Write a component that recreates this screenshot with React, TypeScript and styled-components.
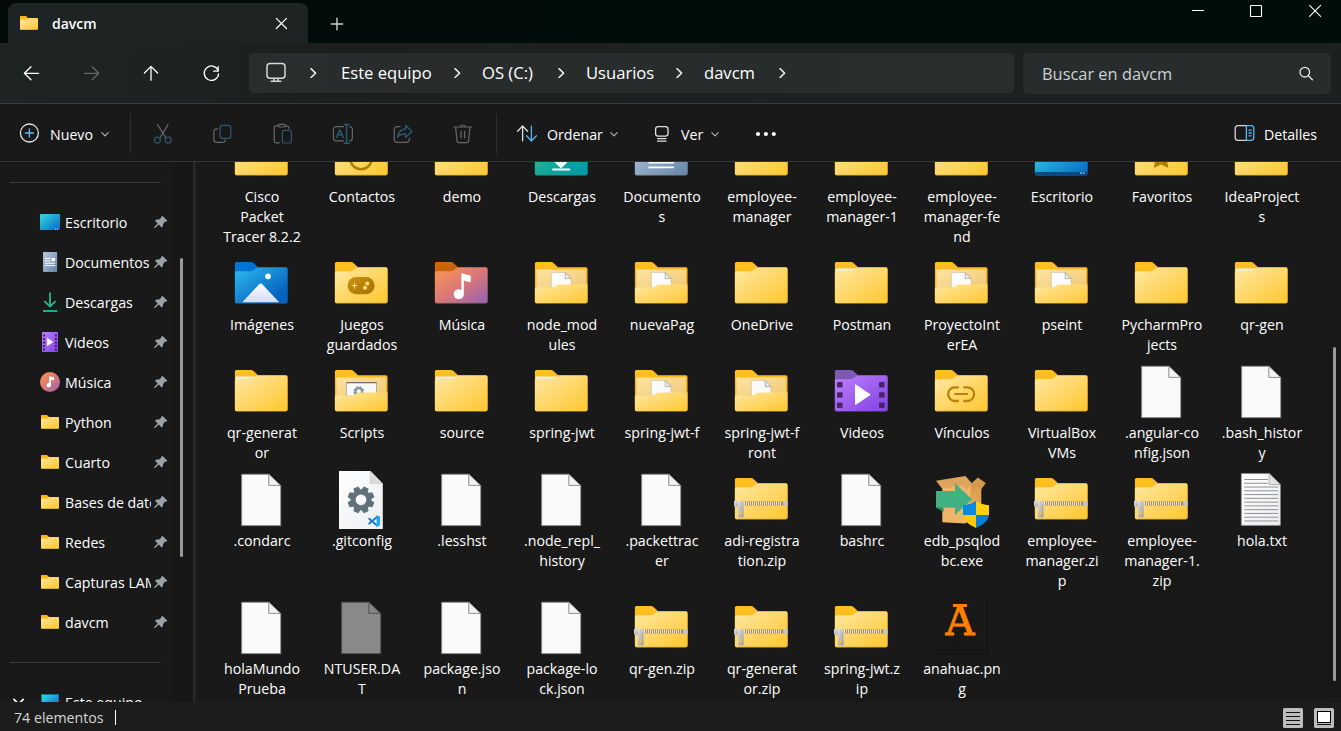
import React from "react";
import styled, { createGlobalStyle } from "styled-components";

const Global = createGlobalStyle`
  * { box-sizing: border-box; }
  html, body { margin: 0; padding: 0; background: #191919; overflow: hidden; }
  body { font-family: "Open Sans", "Noto Sans", sans-serif; color: #fff; }
  svg { display: block; flex: none; }
`;

const Window = styled.div`
  display: flex;
  flex-direction: column;
  width: 1341px;
  height: 731px;
  background: #191919;
  overflow: hidden;
`;

/* ---------- title bar ---------- */

const TitleBar = styled.header`
  display: flex;
  align-items: flex-start;
  height: 43px;
  flex: none;
  padding-left: 8px;
  background: linear-gradient(90deg, #020b09 0%, #000d0b 60%, #000e0b 100%);
`;

const Tab = styled.div`
  display: flex;
  align-items: center;
  width: 300px;
  height: 40px;
  margin-top: 3px;
  padding: 0 20px 0 11px;
  border-radius: 8px 8px 0 0;
  background: #1e2323;
`;

const TabTitle = styled.span`
  flex: 1;
  margin: 1px 0 0 13px;
  font-size: 14px;
  font-weight: 600;
  line-height: 20px;
`;

const NewTab = styled.div`
  margin: 16px 0 0 21px;
`;

const WindowButtons = styled.div`
  display: flex;
  align-items: center;
  gap: 42px;
  margin: 2px 17px 0 auto;
`;

/* ---------- navigation bar ---------- */

const NavBar = styled.nav`
  display: flex;
  align-items: flex-start;
  height: 61px;
  flex: none;
  padding: 10px 10px 0 20px;
  border-bottom: 1px solid #3a3c3a;
  background: linear-gradient(100deg, #1e2323 0%, #1e2222 12%, #1d1f1e 26%, #1c2221 48%, #1b2120 100%);
`;

const NavButtons = styled.div`
  display: flex;
  align-items: center;
  gap: 36px;
  width: 229px;
  height: 40px;
`;

const AddressBar = styled.div`
  display: flex;
  align-items: center;
  width: 765px;
  height: 40px;
  padding-left: 16px;
  border-radius: 5px;
  background: linear-gradient(90deg, #292d2d, #282d2c 30%, #272e2d);
`;

const Trail = styled.div`
  display: flex;
  align-items: center;
  margin-left: 21px;
`;

const Crumb = styled.span<{ $w: number }>`
  width: ${(p) => p.$w}px;
  font-size: 16.6px;
  line-height: 22px;
  white-space: nowrap;
`;

const ChevronSlot = styled.span<{ $w: number }>`
  display: flex;
  width: ${(p) => p.$w}px;
`;

const SearchBox = styled.div`
  display: flex;
  align-items: center;
  justify-content: space-between;
  width: 308px;
  height: 41px;
  margin-left: 9px;
  padding: 0 17px 0 19px;
  border-radius: 5px;
  background: #272d2d;
  color: #cfd1d1;
  font-size: 16.4px;
`;

/* ---------- command bar ---------- */

const CommandBar = styled.div`
  display: flex;
  align-items: center;
  height: 58px;
  flex: none;
  padding: 2px 0 0 19px;
  border-bottom: 1px solid #343434;
  background: #191919;
`;

const Command = styled.div<{ $w?: number; $gap?: number }>`
  display: flex;
  align-items: center;
  gap: ${(p) => p.$gap ?? 10}px;
  ${(p) => (p.$w ? `width: ${p.$w}px;` : "")}
  font-size: 14.2px;
  line-height: 20px;
  white-space: nowrap;
  svg:last-child { margin-left: -3px; }
`;

const CommandText = styled.span`
  padding-top: 2px;
`;

const DetailsCommand = styled(Command)`
  margin: 0 24px 0 auto;
`;

const Divider = styled.div`
  width: 1px;
  height: 40px;
  background: #2e2e2e;
`;

const DisabledTools = styled.div`
  display: flex;
  gap: 36px;
  width: 365px;
  padding-left: 20px;
`;

const SortArea = styled.div`
  display: flex;
  align-items: center;
  padding-left: 19px;
`;

/* ---------- body ---------- */

const Body = styled.main`
  display: flex;
  height: 540px;
  flex: none;
  overflow: hidden;
`;

const Sidebar = styled.aside`
  width: 171px;
  height: 540px;
  overflow: hidden;
`;

const SideSeparator = styled.div`
  display: flex;
  align-items: center;
  height: 40px;
  padding: 0 10px;
  &::before {
    content: "";
    height: 1px;
    width: 151px;
    background: #3a3a3a;
  }
`;

const SideRow = styled.div`
  display: flex;
  align-items: center;
  height: 40px;
`;

const Expander = styled.span`
  display: flex;
  width: 40px;
  padding-left: 13px;
`;

const SideLabel = styled.span`
  width: 86px;
  margin: 1px 3px 0 5px;
  overflow: hidden;
  font-size: 14.2px;
  line-height: 20px;
  white-space: nowrap;
`;

const SideTrack = styled.div`
  width: 22px;
  height: 540px;
  padding: 96px 0 0 9px;
  background: #171717;
`;

const Splitter = styled.div`
  width: 4px;
  background: #1f1f1f;
  border-left: 2px solid #2a2a2a;
`;

const Thumb = styled.div<{ $h: number }>`
  width: 3px;
  height: ${(p) => p.$h}px;
  border-radius: 2px;
  background: #9a9a9a;
`;

const Content = styled.section`
  flex: 1;
  height: 540px;
  padding-left: 14px;
  overflow: hidden;
`;

const IconGrid = styled.div`
  display: grid;
  grid-template-columns: repeat(11, 100px);
  margin-top: -38px;
`;

const Item = styled.figure`
  display: flex;
  flex-direction: column;
  align-items: center;
  margin: 0;
  padding-bottom: 5px;
`;

const ItemLabel = styled.figcaption`
  margin: 1px 0 0 2px;
  min-height: 40px;
  font-size: 14.2px;
  line-height: 20px;
  text-align: center;
  white-space: pre;
`;

const ContentTrack = styled.div`
  width: 17px;
  padding: 185px 0 0 9px;
  background: #181818;
`;

/* ---------- status bar ---------- */

const StatusBar = styled.footer`
  display: flex;
  align-items: center;
  height: 29px;
  flex: none;
  padding: 2px 7px 0 14px;
  background: #1c1c1c;
`;

const StatusText = styled.span`
  width: 101px;
  font-size: 14.2px;
  color: #d6d6d6;
`;

const Caret = styled.span`
  width: 1px;
  height: 15px;
  background: #fff;
`;

const ViewButtons = styled.div`
  display: flex;
  gap: 11px;
  margin-left: auto;
`;

/* ---------- shared gradients ---------- */

const DefsHost = styled.svg`
  position: absolute;
  width: 0;
  height: 0;
`;

type Stops = [string, string][];

const Grad = ({ id, stops, v }: { id: string; stops: Stops; v?: boolean }) => (
  <linearGradient id={id} x1="0" y1="0" x2={v ? "0" : "1"} y2="1">
    {stops.map(([o, c]) => (
      <stop key={o} offset={o} stopColor={c} />
    ))}
  </linearGradient>
);

const Gradients = () => (
  <DefsHost aria-hidden="true">
    <defs>
      <Grad id="yellow" stops={[["0", "#ffe8a3"], ["1", "#ffc62e"]]} />
      <Grad id="yellowTab" v stops={[["0", "#ffc021"], ["1", "#f5b015"]]} />
      <Grad id="inner" stops={[["0", "#ffe4a0"], ["1", "#efc978"]]} />
      <Grad id="blue" stops={[["0.1", "#28b0ec"], ["0.8", "#0563bd"]]} />
      <Grad id="blueTab" stops={[["0", "#0078d8"], ["1", "#0062ba"]]} />
      <Grad id="peak" v stops={[["0", "#ffffff"], ["1", "#d2dcfa"]]} />
      <Grad id="music" stops={[["0", "#ff9750"], ["0.5", "#d97878"], ["1", "#9660b8"]]} />
      <Grad id="musicTab" stops={[["0", "#d36606"], ["1", "#a05a30"]]} />
      <Grad id="violet" stops={[["0", "#bd80fb"], ["1", "#8241e4"]]} />
      <Grad id="teal" stops={[["0", "#3bc686"], ["0.6", "#0ea3a0"], ["1", "#0098a8"]]} />
      <Grad id="slate" stops={[["0", "#b8c9de"], ["1", "#6484a8"]]} />
      <Grad id="desk" stops={[["0", "#35dbe6"], ["1", "#0b66c0"]]} />
      <Grad id="brown" stops={[["0", "#c99410"], ["1", "#a87200"]]} />
      <Grad id="paper" stops={[["0", "#ffffff"], ["1", "#eceef2"]]} />
      <Grad id="metal" stops={[["0", "#e2e2e2"], ["1", "#999999"]]} />
    </defs>
  </DefsHost>
);

/* ---------- large icons ---------- */

const Large = ({ children }: { children: React.ReactNode }) => (
  <svg width="60" height="62" viewBox="0 0 60 62">
    {children}
  </svg>
);

const BACK = "M5 10H19.5Q21.5 10 23 11.4L27 15.3H55Q56.5 15.3 56.5 17V49.6Q56.5 51.2 55 51.2H5.4Q3.9 51.2 3.9 49.6V11.5Q3.9 10 5.4 10Z";
const FRONT = "M3.9 20.6Q3.9 19.2 5.3 19.2H19Q21.5 19.2 23.4 17.6L25.2 16.3Q26.2 15.6 27.6 15.6H55Q56.5 15.6 56.5 17.2V49.6Q56.5 51.2 55 51.2H5.4Q3.9 51.2 3.9 49.6Z";

const FolderShape = ({ back = "yellowTab", front = "yellow" }: { back?: string; front?: string }) => (
  <>
    <path d={BACK} fill={`url(#${back})`} />
    <path d={FRONT} fill={`url(#${front})`} />
    <path d="M4.6 51H55.8" stroke="#8a6a20" strokeOpacity=".45" strokeWidth=".6" />
  </>
);

const Gear = ({ cx, cy, scale = 1, color = "#5f727b" }: { cx: number; cy: number; scale?: number; color?: string }) => (
  <g transform={`translate(${cx} ${cy}) scale(${scale})`}>
    {[22.5, 67.5, 112.5, 157.5, 202.5, 247.5, 292.5, 337.5].map((a) => (
      <path key={a} d="M-3.6 -9L-2.6 -13.4H2.6L3.6 -9Z" transform={`rotate(${a})`} fill={color} />
    ))}
    <circle r="7.9" fill="none" stroke={color} strokeWidth="5" />
  </g>
);

const OpenFolder = ({ gear }: { gear?: boolean }) => (
  <>
    <path d={BACK} fill="url(#yellowTab)" />
    <path d="M5.4 17.6H54.9V36H5.4Z" fill="url(#inner)" />
    {gear ? (
      <>
        <path d="M15.4 22.7H45.5V36H15.4Z" fill="#f7f8fa" stroke="#777" strokeWidth=".5" />
        <path d="M15.4 22.7H45.5" stroke="#666" strokeWidth="1" />
        <Gear cx={27.8} cy={31.5} scale={0.4} color="#8495a0" />
      </>
    ) : (
      <>
        <path d="M20.4 20.5H34.5L40 26.5V36H20.4Z" fill="#fbfbfb" stroke="#c9bfa5" strokeWidth=".6" />
        <path d="M34.2 20.6V26.6H40Z" fill="#eee" stroke="#9a9890" strokeWidth=".7" />
      </>
    )}
    <path
      d="M3.9 35.6H21Q23 35.6 24.6 34L25.2 33.5Q26.2 32.4 28 32.4H56.5V49.6Q56.5 51.2 55 51.2H5.4Q3.9 51.2 3.9 49.6Z"
      fill="url(#yellow)"
    />
  </>
);

const Page = ({ color = "#fafafa", fold = "#f2f2f2", line = "#8f8f8f" }) => (
  <>
    <path d="M10.7 6.3H37.8L49.7 17.6V57.6H10.7Z" fill={color} stroke={line} strokeWidth=".9" />
    <path d="M37.8 6.3V17.4H49.6Z" fill={fold} stroke={line} strokeWidth="1" />
  </>
);

const teeth = Array.from({ length: 19 }, (_, i) => 13.5 + i * 2);

type Kind =
  | "folder" | "full" | "open" | "scripts" | "contacts" | "downloads" | "documents" | "desktop"
  | "favorites" | "pictures" | "games" | "music" | "videos" | "links" | "file" | "ghost"
  | "text" | "gitconfig" | "zip" | "exe" | "image";

const LargeIcon = ({ kind }: { kind: Kind }) => {
  switch (kind) {
    case "full":
      return (
        <Large>
          <path d={BACK} fill="url(#yellowTab)" />
          <path d="M4.6 20V17.4Q4.6 16.4 5.8 16.4H28V20Z" fill="#eceef4" />
          <path d="M3.9 20.2Q3.9 18.6 5.3 18.6H19Q21.5 18.6 23.4 17.4L25.2 16.3Q26.2 15.4 27.6 15.4H55Q56.5 15.4 56.5 17.2V49.6Q56.5 51.2 55 51.2H5.4Q3.9 51.2 3.9 49.6Z" fill="url(#yellow)" />
        </Large>
      );
    case "open":
      return <Large><OpenFolder /></Large>;
    case "scripts":
      return <Large><OpenFolder gear /></Large>;
    case "contacts":
      return (
        <Large>
          <FolderShape />
          <circle cx="30" cy="34.5" r="10.7" fill="none" stroke="#b07c06" strokeWidth="2.6" />
        </Large>
      );
    case "downloads":
      return (
        <Large>
          <FolderShape back="teal" front="teal" />
          <path d="M30 28V42M24.5 37L30 42.4L35.5 37" fill="none" stroke="#fff" strokeWidth="3" />
          <path d="M22 45.5H38.4" stroke="#fff" strokeWidth="1.8" strokeLinecap="round" />
        </Large>
      );
    case "documents":
      return (
        <Large>
          <FolderShape back="slate" front="slate" />
          <path d="M18 38.6H42.4M18 43.4H42.4" stroke="#fff" strokeWidth="1.6" strokeLinecap="round" />
        </Large>
      );
    case "desktop":
      return (
        <Large>
          <FolderShape back="blueTab" front="desk" />
          <path d="M3.9 48H56.5V49.6Q56.5 51.2 55 51.2H5.4Q3.9 51.2 3.9 49.6Z" fill="#084a86" />
          <path d="M49.3 49.1H50.8M51.8 49.1H53.3" stroke="#d4e8f8" strokeWidth="1.3" />
        </Large>
      );
    case "favorites":
      return (
        <Large>
          <FolderShape />
          <path d="M30 22L33 30H41L35.6 35L37.4 44L30 40.4L22.8 44L24.4 35L19 30H27Z" fill="url(#brown)" />
        </Large>
      );
    case "pictures":
      return (
        <Large>
          <FolderShape back="blueTab" front="blue" />
          <circle cx="37" cy="24.3" r="2.9" fill="#f4fbff" />
          <path d="M11.3 50.2L28.2 32.2Q29.7 30.8 31.2 32.2L48.2 50.2Z" fill="url(#peak)" />
        </Large>
      );
    case "games":
      return (
        <Large>
          <FolderShape />
          <rect x="16.6" y="25" width="27" height="17.2" rx="8.4" fill="url(#brown)" />
          <path d="M23.6 30.8V36.6M20.7 33.7H26.5" stroke="#ffe08a" strokeWidth="1" />
          <circle cx="36.3" cy="31.5" r="2" fill="#ffe08a" />
          <circle cx="34" cy="35.8" r="2" fill="#ffe08a" />
        </Large>
      );
    case "music":
      return (
        <Large>
          <FolderShape back="musicTab" front="music" />
          <path d="M30.4 21Q34.6 22.8 39.7 23.4V30.2Q35.6 30 32.8 28.6V42.4A5.1 5 0 1 1 30.4 37.9Z" fill="#fff" />
        </Large>
      );
    case "videos":
      return (
        <Large>
          <path d={BACK} fill="#7e58b5" />
          <path d={FRONT} fill="url(#violet)" />
          {[22, 32.2, 42.4].map((y) => (
            <g key={y} fill="#48246c">
              <rect x="6" y={y} width="5.6" height="5.6" rx="1" />
              <rect x="48" y={y} width="5.6" height="5.6" rx="1" />
            </g>
          ))}
          <path d="M24 24.8Q24 24 24.8 24.4L39 34Q39.8 34.7 39 35.3L24.8 44.8Q24 45 24 44.4Z" fill="#fff" />
        </Large>
      );
    case "links":
      return (
        <Large>
          <FolderShape />
          <path d="M27.8 27.3H24A6.7 6.7 0 0 0 24 41H27.8M32.3 27.3H36.3A6.7 6.7 0 0 1 36.3 41H32.3" fill="none" stroke="#b98208" strokeWidth="2.3" />
          <path d="M24.2 34.1H36.2" stroke="#b98208" strokeWidth="2" strokeLinecap="round" />
        </Large>
      );
    case "file":
      return <Large><Page /></Large>;
    case "ghost":
      return <Large><Page color="#898989" fold="#858585" line="#555" /></Large>;
    case "text":
      return (
        <Large>
          <path d="M10.3 5.6H38.6L49.4 16.8V57.4H10.3Z" fill="url(#paper)" stroke="#8a8a8a" strokeWidth=".8" />
          {Array.from({ length: 12 }, (_, i) => (
            <path key={i} d={`M13.3 ${11.5 + i * 3.77}H${i < 2 ? 37 : 47.2}`} stroke="#919191" strokeWidth="1" />
          ))}
          <path d="M38.2 5.8V16.6H49.4Z" fill="#e2e2e2" stroke="#999" strokeWidth=".7" />
        </Large>
      );
    case "gitconfig":
      return (
        <Large>
          <path d="M8 3H39.5L51.8 15.8V61H8Z" fill="url(#paper)" />
          <path d="M39.2 3V15.6H51.6Z" fill="#dcdcdc" stroke="#c2c2c2" strokeWidth=".6" />
          <Gear cx={30} cy={31.8} />
          <path d="M46 49L38.2 55.6M38.2 50.8L46 57.6" stroke="#1580d0" strokeWidth="2" strokeLinecap="round" />
          <path d="M45.6 47L49 48.6V57.2L45.6 58.8Z" fill="#24a5f0" />
        </Large>
      );
    case "zip":
      return (
        <Large>
          <FolderShape />
          <path d="M13 35.6H53" stroke="#a8894a" strokeWidth="4" />
          {teeth.map((x) => (
            <path key={x} d={`M${x} 33.6V37.4`} stroke="#efebdf" strokeWidth=".95" />
          ))}
          <path d="M3 33L6.5 32.6L8 34H12V37.6H8L6.5 39L3 38.4Z" fill="url(#metal)" />
          <rect x="52" y="33.2" width="4.6" height="5" rx="1" fill="#c4c4c6" />
          <rect x="6.8" y="33" width="5.8" height="16.4" rx="1" fill="url(#metal)" />
          <rect x="8.7" y="43" width="2" height="4.4" rx=".8" fill="#ecc052" />
        </Large>
      );
    case "exe":
      return (
        <Large>
          <path d="M11.3 16L39.5 15.5L49.7 20V46L34 55.5L11.3 54.2Z" fill="#efb568" />
          <path d="M39.5 15.5L50.3 20V46L39.5 52Z" fill="#dfa152" />
          <path d="M5 12.7L34.5 8L41 15.6L35.5 22L31 17.5L11 20.5Z" fill="#dca55b" />
          <path d="M40.4 15.6L46.8 9.6L54.8 15L50 21.4L47 18.5L41 25Z" fill="#d39a4e" />
          <path d="M5 39.7H12.5V44Z" fill="#2c8c60" />
          <path d="M5 23H24V15.3L41 31.3L24 47V39.7H5Z" fill="#41b183" />
          <path d="M45 33Q39 37 32 37.2V46.9H45Z" fill="#0a8ade" />
          <path d="M45 33Q51 37 58 37.2V46.9H45Z" fill="#ffd00b" />
          <path d="M32 46.9Q33 55 45 60V46.9Z" fill="#ffc70a" />
          <path d="M58 46.9Q57 55 45 60V46.9Z" fill="#0a80d4" />
        </Large>
      );
    case "image":
      return (
        <Large>
          <rect x="5" y="4" width="51.5" height="54" fill="#191919" />
          <path d="M56.3 4V58H5" fill="none" stroke="#111" strokeWidth="1" />
          <rect x="22" y="8" width="14" height="3" fill="#ff8000" />
          <text x="29" y="39" textAnchor="middle" fontFamily="DejaVu Serif" fontSize="41" textLength="29" lengthAdjust="spacingAndGlyphs" fill="#ff8000" stroke="#ff8000" strokeWidth=".9">A</text>
          <text x="29" y="48" textAnchor="middle" fontFamily="DejaVu Serif" fontSize="6.5" fill="#131313">ANÁHUAC</text>
          <text x="29" y="55" textAnchor="middle" fontFamily="DejaVu Serif" fontSize="6" fill="#131313">QUERÉTARO</text>
        </Large>
      );
    default:
      return <Large><FolderShape /></Large>;
  }
};

/* ---------- small icons ---------- */

type IconProps = { size?: number; w?: number; color?: string; children: React.ReactNode };

const Glyph = ({ size = 20, w = 1.2, color = "#fff", children }: IconProps) => (
  <svg width={size} height={size} viewBox={`0 0 ${size} ${size}`} fill="none" stroke={color} strokeWidth={w} strokeLinecap="round" strokeLinejoin="round">
    {children}
  </svg>
);

const SmallFolder = () => (
  <svg width="20" height="20" viewBox="0 0 20 20">
    <path d="M1.5 3H7L9 5H18Q19 5 19 6V16Q19 16.8 18.2 16.8H1.8Q1 16.8 1 16V3.6Q1 3 1.5 3Z" fill="#fdb813" />
    <path d="M1 6.8H7L9 5.3H18Q19 5.3 19 6.2V16Q19 16.4 18.2 16.4H1.8Q1 16.4 1 16Z" fill="url(#yellow)" />
  </svg>
);

const Pin = () => (
  <svg width="14" height="14" viewBox="0 0 14 14">
    <path d="M8.2 .8L13.3 5.5L12.1 6.8L11 6.7L9.2 9L8.9 11.2L7.5 12.4L4.7 9.6L1.2 13H.3V12L3.7 8.6L1.1 6L2.3 4.6L5 4.5L7.2 2.8L7.1 1.9Z" fill="#98a2a8" />
  </svg>
);

type SideKind = "desktop" | "documents" | "downloads" | "videos" | "music" | "folder" | "pc";

const SideIcon = ({ kind }: { kind: SideKind }) => {
  if (kind === "folder") return <SmallFolder />;
  return (
    <svg width="20" height="20" viewBox="0 0 20 20">
      {kind === "desktop" && (
        <>
          <rect x="0" y="2" width="20" height="16" rx=".8" fill="url(#desk)" />
          <path d="M15 17.2H16M17 17.2H18" stroke="#e5f4ff" strokeWidth=".9" />
        </>
      )}
      {kind === "documents" && (
        <>
          <rect x="3" y="0" width="14.2" height="20" rx="1" fill="url(#slate)" />
          <path d="M5 6.5H10.5M5 8.9H10.5M5 11.2H15M5 13.5H15" stroke="#fff" strokeWidth="1" />
          <rect x="11.6" y="6" width="3.4" height="3.2" fill="#fff" />
        </>
      )}
      {kind === "downloads" && (
        <>
          <path d="M10 .5V14M4.4 9.2L10 14.6L15.6 9.2" fill="none" stroke="#22ba90" strokeWidth="1.8" />
          <path d="M3 19H17.2" stroke="#1db79a" strokeWidth="1.9" />
        </>
      )}
      {kind === "videos" && (
        <>
          <rect x="2" y="0" width="16" height="20" rx="1" fill="url(#violet)" />
          <path d="M4.1 2.6V18.8M15.9 2.6V18.8" stroke="#3f2262" strokeWidth="2" strokeDasharray="2 1.5" />
          <path d="M7 5.8L13.4 10L7 14.2Z" fill="#fff" />
        </>
      )}
      {kind === "music" && (
        <>
          <circle cx="10" cy="10" r="10" fill="url(#music)" />
          <path d="M9.2 4L14 5.4V8.2L11 7.5V13A2.2 2.2 0 1 1 9.2 11Z" fill="#fff" />
        </>
      )}
      {kind === "pc" && (
        <>
          <rect x="1" y="2" width="18" height="13" fill="#087a92" />
          <rect x="2" y="3" width="16" height="12" fill="url(#desk)" />
        </>
      )}
    </svg>
  );
};

const CrumbChevron = () => (
  <Glyph size={10} w={1.5} color="#e8e8e8"><path d="M3 .6L7.6 5.1L3 9.6" /></Glyph>
);

const DropChevron = () => (
  <Glyph size={10} w={1.1} color="#b5b5b5"><path d="M1.8 3.6L5 6.8L8.2 3.6" /></Glyph>
);

const GREY = "#666868";
const DIM_BLUE = "#2a5870";

/* ---------- data ---------- */

const crumbs: [string, number][] = [
  ["Este equipo", 111],
  ["OS (C:)", 74],
  ["Usuarios", 88],
  ["davcm", 73],
];

const sideItems: [SideKind, string][] = [
  ["desktop", "Escritorio"],
  ["documents", "Documentos"],
  ["downloads", "Descargas"],
  ["videos", "Videos"],
  ["music", "Música"],
  ["folder", "Python"],
  ["folder", "Cuarto"],
  ["folder", "Bases de datos"],
  ["folder", "Redes"],
  ["folder", "Capturas LAMP"],
  ["folder", "davcm"],
];

const items: [Kind, string][] = [
  ["folder", "Cisco\nPacket\nTracer 8.2.2"],
  ["contacts", "Contactos"],
  ["folder", "demo"],
  ["downloads", "Descargas"],
  ["documents", "Documento\ns"],
  ["folder", "employee-\nmanager"],
  ["folder", "employee-\nmanager-1"],
  ["folder", "employee-\nmanager-fe\nnd"],
  ["desktop", "Escritorio"],
  ["favorites", "Favoritos"],
  ["folder", "IdeaProject\ns"],
  ["pictures", "Imágenes"],
  ["games", "Juegos\nguardados"],
  ["music", "Música"],
  ["open", "node_mod\nules"],
  ["open", "nuevaPag"],
  ["folder", "OneDrive"],
  ["full", "Postman"],
  ["open", "ProyectoInt\nerEA"],
  ["open", "pseint"],
  ["folder", "PycharmPro\njects"],
  ["full", "qr-gen"],
  ["full", "qr-generat\nor"],
  ["scripts", "Scripts"],
  ["full", "source"],
  ["full", "spring-jwt"],
  ["open", "spring-jwt-f"],
  ["open", "spring-jwt-f\nront"],
  ["videos", "Videos"],
  ["links", "Vínculos"],
  ["folder", "VirtualBox\nVMs"],
  ["file", ".angular-co\nnfig.json"],
  ["file", ".bash_histor\ny"],
  ["file", ".condarc"],
  ["gitconfig", ".gitconfig"],
  ["file", ".lesshst"],
  ["file", ".node_repl_\nhistory"],
  ["file", ".packettrac\ner"],
  ["zip", "adi-registra\ntion.zip"],
  ["file", "bashrc"],
  ["exe", "edb_psqlod\nbc.exe"],
  ["zip", "employee-\nmanager.zi\np"],
  ["zip", "employee-\nmanager-1.\nzip"],
  ["text", "hola.txt"],
  ["file", "holaMundo\nPrueba"],
  ["ghost", "NTUSER.DA\nT"],
  ["file", "package.jso\nn"],
  ["file", "package-lo\nck.json"],
  ["zip", "qr-gen.zip"],
  ["zip", "qr-generat\nor.zip"],
  ["zip", "spring-jwt.z\nip"],
  ["image", "anahuac.pn\ng"],
];

/* ---------- app ---------- */

export default function App() {
  return (
    <Window>
      <Global />
      <Gradients />
      <TitleBar>
        <Tab>
          <SmallFolder />
          <TabTitle>davcm</TabTitle>
          <Glyph size={13} w={1.2}><path d="M1.3 1.3L11.5 11.5M11.5 1.3L1.3 11.5" /></Glyph>
        </Tab>
        <NewTab>
          <Glyph size={16} w={1.4} color="#cfd3d2"><path d="M8 2.3V13.7M2.3 8H13.7" /></Glyph>
        </NewTab>
        <WindowButtons>
          <Glyph size={16} w={1}><path d="M2.5 7.5H13.5" /></Glyph>
          <Glyph size={16} w={1.1}><rect x="2.5" y="2.5" width="11" height="11" rx=".6" /></Glyph>
          <Glyph size={18} w={1.1}><path d="M3.6 3.4L14.6 14.4M14.6 3.4L3.6 14.4" /></Glyph>
        </WindowButtons>
      </TitleBar>

      <NavBar>
        <NavButtons>
          <Glyph size={24} w={1.3}><path d="M18.6 12.3H4.6M11 5.8L4.4 12.3L11 18.8" /></Glyph>
          <Glyph size={24} w={1.3} color="#636867"><path d="M4.6 12.3H18.6M12.2 5.8L18.8 12.3L12.2 18.8" /></Glyph>
          <Glyph size={24} w={1.3}><path d="M11 19.3V5.6M4.4 12L11 5.4L17.6 12" /></Glyph>
          <Glyph size={24} w={1.3}><path d="M18.3 10A7.2 7.2 0 1 0 18.6 13M18.2 5.6V10.2H13.6" /></Glyph>
        </NavButtons>
        <AddressBar>
          <Glyph size={22} w={1.5} color="#d6d8d8">
            <rect x="2" y="1.6" width="18" height="14.6" rx="3" />
            <path d="M9 16.4V19M13 16.4V19M6.2 19.2H15.8" />
          </Glyph>
          <Trail>
            <ChevronSlot $w={33}><CrumbChevron /></ChevronSlot>
            {crumbs.map(([name, w]) => (
              <React.Fragment key={name}>
                <Crumb $w={w}>{name}</Crumb>
                <ChevronSlot $w={30}><CrumbChevron /></ChevronSlot>
              </React.Fragment>
            ))}
          </Trail>
        </AddressBar>
        <SearchBox>
          Buscar en davcm
          <Glyph size={16} w={1.3} color="#e6e8e8"><circle cx="6.8" cy="6.2" r="4.8" /><path d="M10.4 9.8L14.4 13.8" /></Glyph>
        </SearchBox>
      </NavBar>

      <CommandBar>
        <Command $w={111}>
          <Glyph size={21} w={1.3} color="#e4e4e4">
            <circle cx="10.4" cy="10" r="9" />
            <path d="M10.4 6V14M6.4 10H14.4" stroke="#60c0f5" />
          </Glyph>
          <CommandText>Nuevo</CommandText>
          <DropChevron />
        </Command>
        <Divider />
        <DisabledTools>
          <Glyph size={24} w={1.2} color={GREY}>
            <path d="M6.6 2.6L14.9 16M17 2.6L8.8 16" />
            <g stroke={DIM_BLUE}><circle cx="6.4" cy="18.2" r="3" /><circle cx="17.2" cy="18.2" r="3" /></g>
          </Glyph>
          <Glyph size={24} w={1.2} color={GREY}>
            <path d="M6.4 6.8H5.6A2.8 2.8 0 0 0 2.8 9.6V17.6A2.8 2.8 0 0 0 5.6 20.4H11.4A2.8 2.8 0 0 0 14.2 18" />
            <rect x="9" y="3.4" width="10.8" height="13" rx="2.4" stroke={DIM_BLUE} />
          </Glyph>
          <Glyph size={24} w={1.2} color={GREY}>
            <path d="M7.6 3.8H5A1.8 1.8 0 0 0 3.2 5.6V19A1.8 1.8 0 0 0 5 20.8H8.4M14.4 3.8H16A1.8 1.8 0 0 1 17.8 5.6V6.4" />
            <rect x="7.4" y="2.4" width="7" height="2.6" rx="1.3" />
            <rect x="11.4" y="8.4" width="9" height="12.6" rx="1.6" stroke={DIM_BLUE} />
          </Glyph>
          <Glyph size={24} w={1.2} color={GREY}>
            <path d="M12.6 4.6H5.4A2.8 2.8 0 0 0 2.4 7.4V16A2.8 2.8 0 0 0 5.4 18.8H12.6M18.6 4.6A2.8 2.8 0 0 1 21.4 7.4V16A2.8 2.8 0 0 1 18.6 18.8" />
            <path d="M5.4 15.4L8.8 7.8L12.2 15.4M6.6 12.8H11M15.6 2.6V21M13.2 2.4H18M13.2 21.2H18" stroke={DIM_BLUE} strokeWidth="1.5" />
          </Glyph>
          <Glyph size={24} w={1.2} color={GREY}>
            <path d="M9 4.6H6.2A3 3 0 0 0 3.2 7.6V17.4A3 3 0 0 0 6.2 20.4H15.4A3 3 0 0 0 18.4 17.4V16.4" />
            <path d="M14.6 3.6L21 9.4L14.6 15.2V12Q9 11.6 6.6 15.4Q7.4 7.6 14.6 7Z" stroke={DIM_BLUE} strokeWidth="1.4" />
          </Glyph>
          <Glyph size={24} w={1.2} color={GREY}>
            <path d="M3 5H20.6M9.2 5A2.6 2 0 0 1 14.4 5M4.6 5L6 18.6A2 2 0 0 0 8 20.6H15.6A2 2 0 0 0 17.6 18.6L19 5M10 9.4V15.8M13.6 9.4V15.8" />
          </Glyph>
        </DisabledTools>
        <Divider />
        <SortArea>
          <Command $gap={9} $w={137}>
            <Glyph size={22} w={1.3} color="#e0e0e0">
              <path d="M6.6 17.8V3.2M1.6 8.2L6.6 3L11.6 8.2" />
              <path d="M15.4 3.2V17.8M10.6 12.8L15.4 18L20.4 12.8" stroke="#55b5ec" />
            </Glyph>
            <CommandText>Ordenar</CommandText>
            <DropChevron />
          </Command>
          <Command $gap={10} $w={102}>
            <Glyph size={18} w={1.3} color="#e0e0e0">
              <rect x="2.6" y="1.6" width="12.4" height="9.6" rx="2.4" />
              <path d="M4.6 13.6H13M4.6 16.2H13" />
            </Glyph>
            <CommandText>Ver</CommandText>
            <DropChevron />
          </Command>
          <svg width="22" height="6" viewBox="0 0 22 6" fill="#fff">
            <circle cx="3" cy="3" r="2.1" /><circle cx="10.9" cy="3" r="2.1" /><circle cx="18.8" cy="3" r="2.1" />
          </svg>
        </SortArea>
        <DetailsCommand $gap={9}>
          <Glyph size={21} w={1.3} color="#d8d8d8">
            <path d="M12.4 2.6H4A2.8 2.8 0 0 0 1.2 5.4V14.6A2.8 2.8 0 0 0 4 17.4H12.4" />
            <path d="M12.4 2.6H17A2.8 2.8 0 0 1 19.8 5.4V14.6A2.8 2.8 0 0 1 17 17.4H12.4ZM15 7.2H17.2M15 10H17.2M15 12.8H17.2" stroke="#5bbcf2" />
          </Glyph>
          <CommandText>Detalles</CommandText>
        </DetailsCommand>
      </CommandBar>

      <Body>
        <Sidebar>
          <SideSeparator />
          {sideItems.map(([kind, label]) => (
            <SideRow key={label}>
              <Expander />
              <SideIcon kind={kind} />
              <SideLabel>{label}</SideLabel>
              <Pin />
            </SideRow>
          ))}
          <SideSeparator />
          <SideRow>
            <Expander>
              <Glyph size={12} w={1.7}><path d="M1 3.4L5.6 8L10.2 3.4" /></Glyph>
            </Expander>
            <SideIcon kind="pc" />
            <SideLabel>Este equipo</SideLabel>
          </SideRow>
        </Sidebar>
        <SideTrack><Thumb $h={299} /></SideTrack>
        <Splitter />
        <Content>
          <IconGrid>
            {items.map(([kind, label]) => (
              <Item key={kind + label}>
                <LargeIcon kind={kind} />
                <ItemLabel>{label}</ItemLabel>
              </Item>
            ))}
          </IconGrid>
        </Content>
        <ContentTrack><Thumb $h={334} /></ContentTrack>
      </Body>

      <StatusBar>
        <StatusText>74 elementos</StatusText>
        <Caret />
        <ViewButtons>
          <svg width="20" height="20" viewBox="0 0 20 20">
            <rect width="20" height="20" rx="1.5" fill="#bdbdbd" />
            <path d="M3 4.5H17M3 8.5H17M3 12.5H17M3 16.5H17" stroke="#111" />
          </svg>
          <svg width="20" height="20" viewBox="0 0 20 20">
            <rect width="20" height="20" rx="1.5" fill="#bdbdbd" />
            <rect x="3.5" y="3.5" width="13" height="11" fill="#fff" stroke="#000" />
            <path d="M3 16.5H17" stroke="#111" />
          </svg>
        </ViewButtons>
      </StatusBar>
    </Window>
  );
}
